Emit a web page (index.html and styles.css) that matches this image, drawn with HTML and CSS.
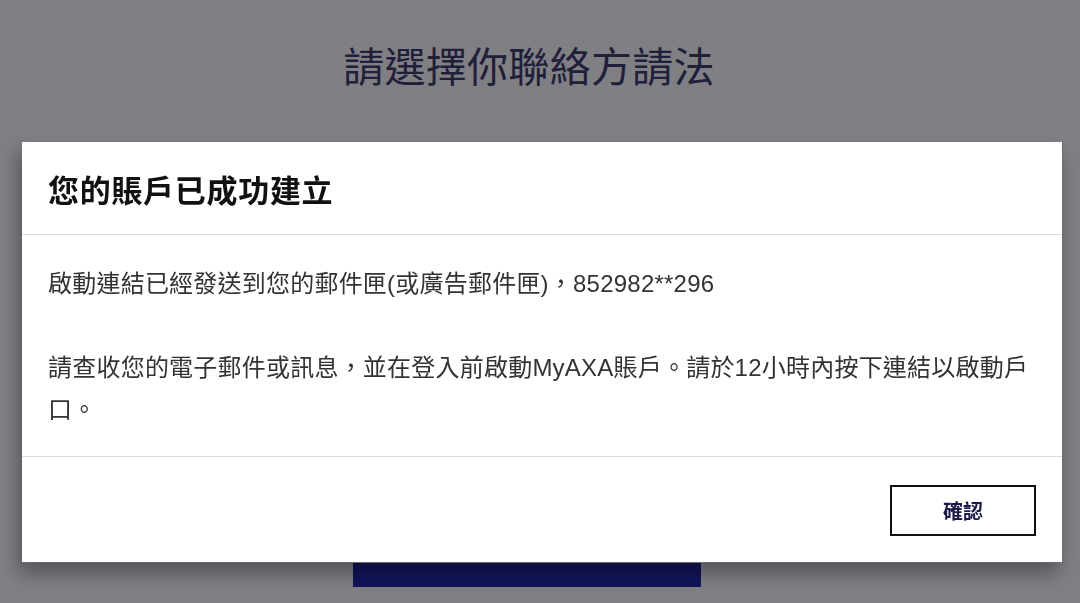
FILE: index.html
```html
<!DOCTYPE html>
<html lang="zh-Hant">

<head>
	<meta charset="UTF-8">
	<meta name="viewport" content="width=device-width, initial-scale=1.0">
	<title>MyAXA</title>
	<link rel="stylesheet" href="styles.css">
</head>

<body>
	<div class="page">
		<h1 class="page-title">請選擇你聯絡方請法</h1>
		<div class="page-spacer"></div>
		<div class="page-actions">
			<button class="btn-primary">&nbsp;</button>
		</div>
	</div>

	<div class="overlay">
		<div class="modal">
			<div class="modal-header">
				<h2>您的賬戶已成功建立</h2>
			</div>
			<div class="modal-body">
				<p>啟動連結已經發送到您的郵件匣(或廣告郵件匣)，852982**296</p>
				<p>請查收您的電子郵件或訊息，並在登入前啟動MyAXA賬戶。請於12小時內按下連結以啟動戶口。</p>
			</div>
			<div class="modal-footer">
				<button class="btn-confirm">確認</button>
			</div>
		</div>
	</div>
</body>

</html>
```

FILE: styles.css
```css
body {
	font-family: "Liberation Sans", "Noto Sans CJK TC", sans-serif;
	background-color: #807f84;
	margin: 0;
	padding: 0;
	height: 603px;
	overflow: hidden;
}

.page {
	display: flex;
	flex-direction: column;
	align-items: center;
	height: 603px;
}

.page-title {
	margin: 34px 22px 0 0;
	font-family: "Noto Sans CJK TC", sans-serif;
	font-size: 41px;
	font-weight: 400;
	letter-spacing: 0.3px;
	line-height: 60px;
	color: #20203a;
}

.page-spacer {
	flex: 1;
}

.page-actions {
	display: flex;
	justify-content: center;
	width: 100%;
	padding-right: 26px;
	box-sizing: border-box;
	margin-bottom: 16px;
}

.btn-primary {
	width: 348px;
	height: 56px;
	background-color: #13145a;
	border: none;
}

.overlay {
	position: fixed;
	top: 0;
	left: 0;
	right: 0;
	bottom: 0;
	padding: 142px 17px 0 22px;
}

.modal {
	background: #ffffff;
	box-shadow: -4px 10px 18px rgba(0, 0, 0, 0.35);
	border-right: 1px solid #6c6c70;
	border-bottom: 1px solid #6c6c70;
}

.modal-header {
	height: 92px;
	display: flex;
	align-items: center;
	padding: 0 26px;
	border-bottom: 1px solid #dcdcdc;
}

.modal-header h2 {
	margin: 0;
	font-family: "Noto Sans CJK TC", sans-serif;
	font-size: 31px;
	font-weight: 700;
	letter-spacing: 0.7px;
	color: #111111;
}

.modal-body {
	padding: 28px 26px 25px;
	border-bottom: 1px solid #dcdcdc;
}

.modal-body p {
	margin: 0;
	font-size: 24px;
	letter-spacing: 0.22px;
	line-height: 42px;
	color: #333333;
}

.modal-body p + p {
	margin-top: 42px;
}

.modal-footer {
	display: flex;
	justify-content: flex-end;
	padding: 28px 26px 26px;
}

.btn-confirm {
	width: 146px;
	height: 51px;
	background: #ffffff;
	border: 2px solid #111111;
	font-family: "Noto Sans CJK TC", sans-serif;
	font-size: 20px;
	font-weight: 700;
	color: #1b1b4d;
	cursor: pointer;
}
```
